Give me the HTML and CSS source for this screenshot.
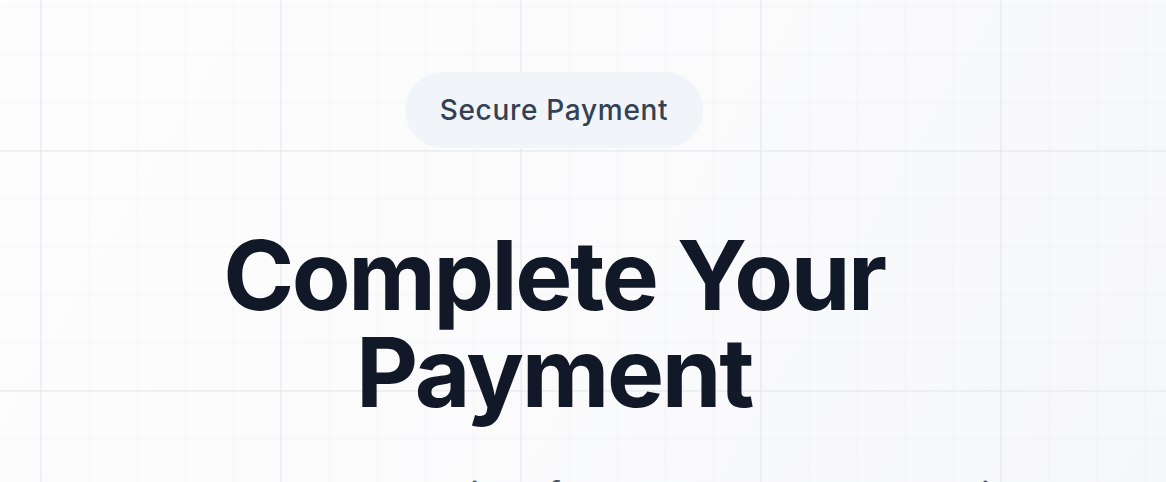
FILE: index.html
```html
<!DOCTYPE html>
<html lang="en">
<head>
<meta charset="utf-8">
<title>Complete Your Payment</title>
<link rel="stylesheet" href="styles.css">
</head>
<body>
  <main class="page">
    <section class="hero">
      <span class="badge">Secure Payment</span>
      <h1 class="title">Complete Your<br>Payment</h1>
      <p class="lead">Our secure processor is safe, so your own card details stay private and protected at every step.</p>
    </section>
  </main>
</body>
</html>
```

FILE: styles.css
```css
* { box-sizing: border-box; }

html, body {
  margin: 0;
  height: 100%;
}

body {
  font-family: Inter, "Noto Sans", "Liberation Sans", sans-serif;
  color: #111827;
  background-color: #fbfbfc;
  background-image:
    linear-gradient(to right, rgba(226, 230, 236, 0.5) 2px, transparent 2px),
    linear-gradient(to bottom, rgba(226, 230, 236, 0.5) 2px, transparent 2px),
    linear-gradient(to right, rgba(232, 235, 240, 0.35) 1px, transparent 1px),
    linear-gradient(to bottom, rgba(232, 235, 240, 0.35) 1px, transparent 1px),
    linear-gradient(120deg, #fdfdfe 0%, #fbfbfc 45%, #f6f7fa 100%);
  background-size: 240px 240px, 240px 240px, 48px 48px, 48px 48px, 100% 100%;
  background-position: 40px 150px, 40px 150px, 41px 6px, 41px 6px, 0 0;
  overflow: hidden;
}

.page {
  padding: 72px 58px 0 0;
}

.hero {
  display: flex;
  flex-direction: column;
  align-items: center;
  text-align: center;
}

.badge {
  display: inline-block;
  padding: 18px 35px;
  border-radius: 999px;
  background: #f1f4f9;
  color: #334155;
  font-size: 28px;
  line-height: 40px;
  font-weight: 500;
  letter-spacing: 0.025em;
}

.title {
  margin: 79px 0 0;
  font-size: 96px;
  line-height: 97px;
  font-weight: 700;
  letter-spacing: -0.025em;
  color: #111827;
}

.lead {
  margin: 46px 0 0;
  max-width: 1000px;
  font-size: 36px;
  line-height: 56px;
  color: #4b5563;
}
```
